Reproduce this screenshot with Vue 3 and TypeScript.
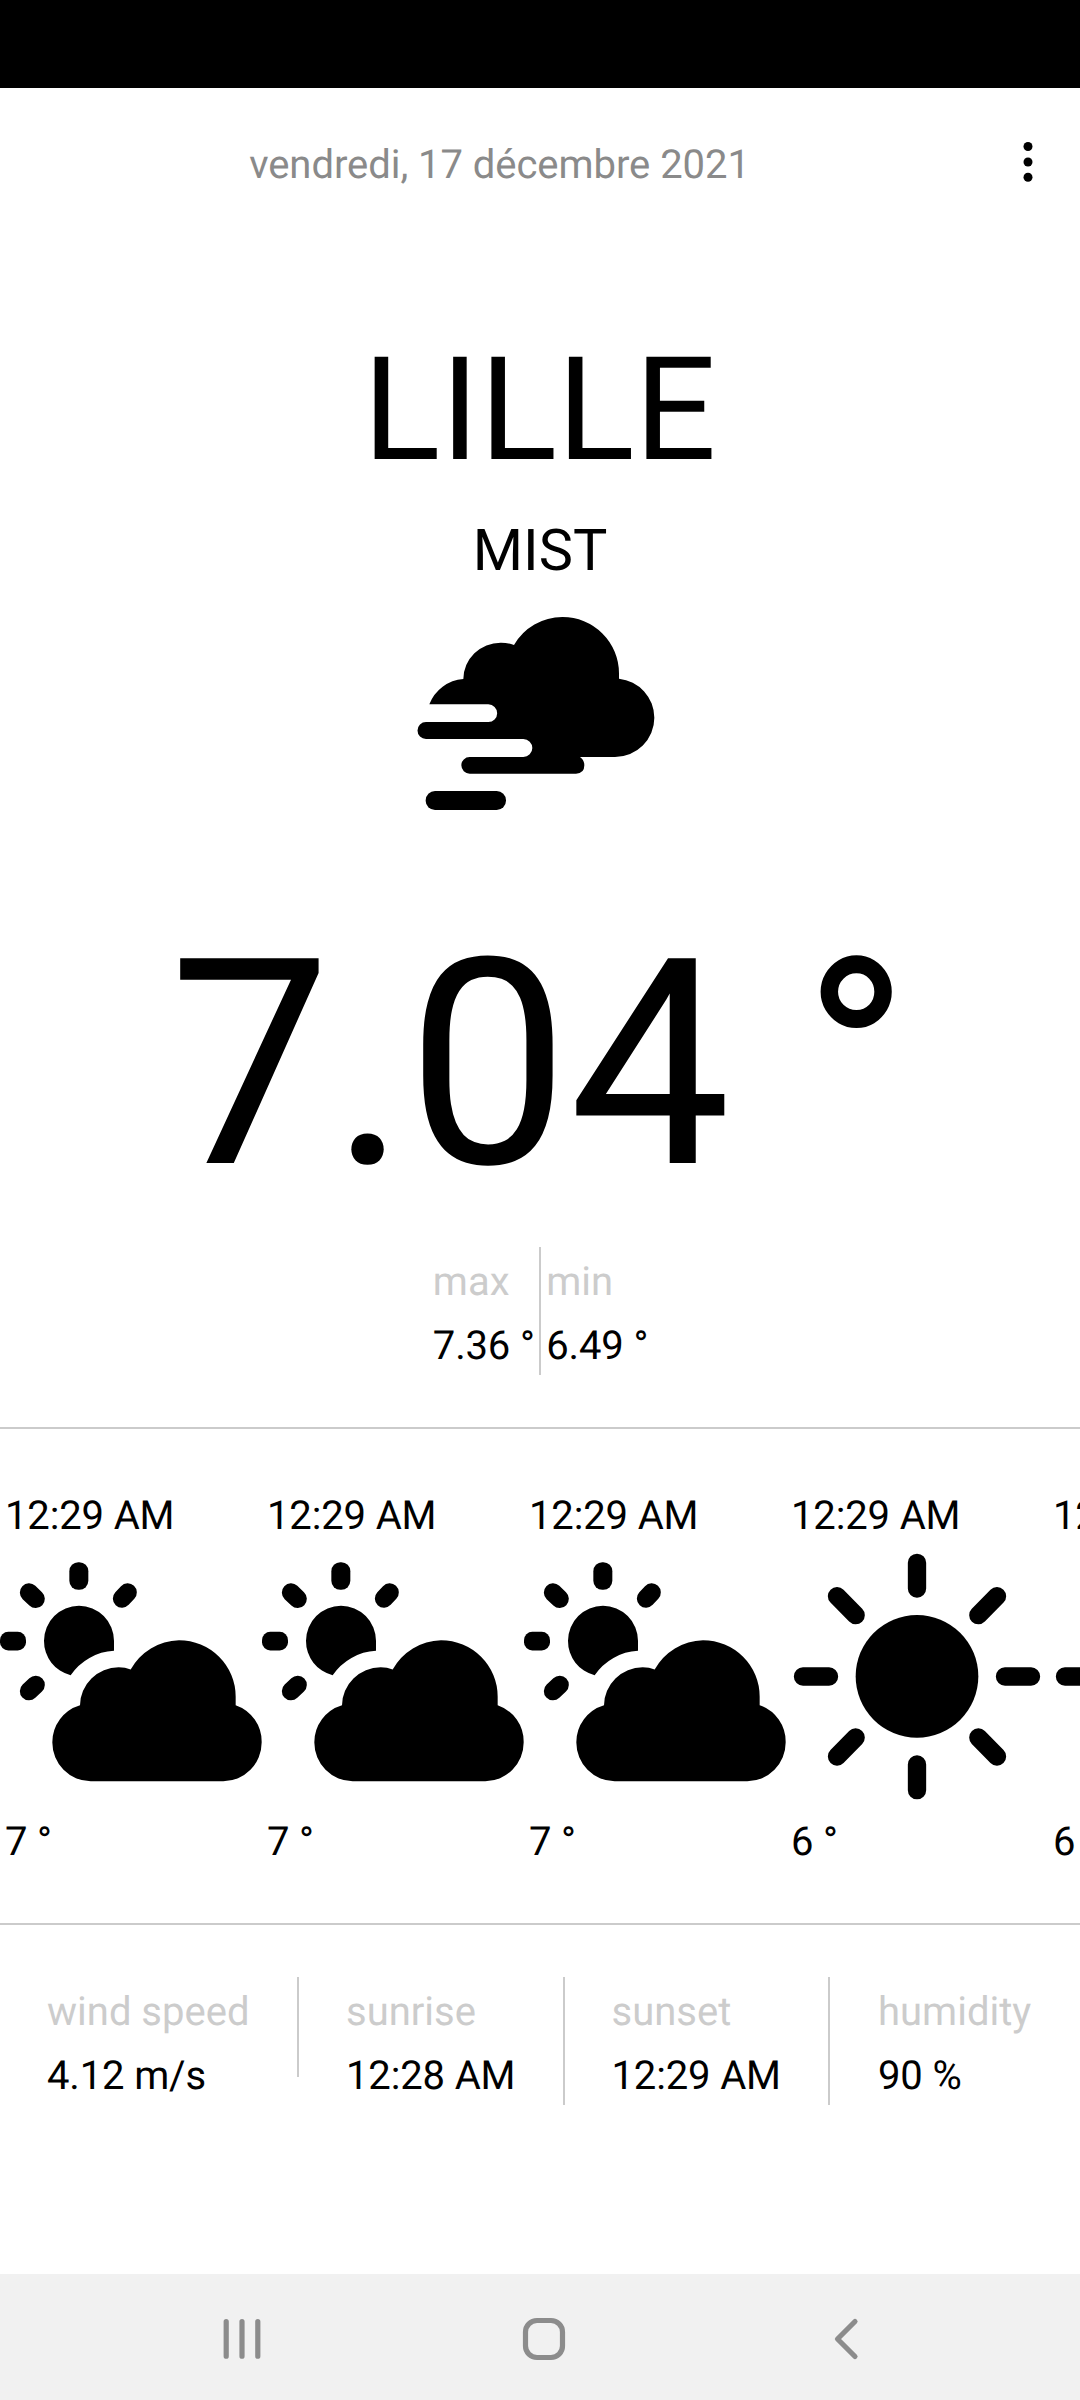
<script setup lang="ts">
interface Forecast {
  time: string
  icon: 'partly' | 'sun'
  temp: string
}

interface Stat {
  label: string
  value: string
}

const forecasts: Forecast[] = [
  { time: '12:29 AM', icon: 'partly', temp: '7 °' },
  { time: '12:29 AM', icon: 'partly', temp: '7 °' },
  { time: '12:29 AM', icon: 'partly', temp: '7 °' },
  { time: '12:29 AM', icon: 'sun', temp: '6 °' },
  { time: '12:29 AM', icon: 'sun', temp: '6 °' },
]

const stats: Stat[] = [
  { label: 'wind speed', value: '4.12 m/s' },
  { label: 'sunrise', value: '12:28 AM' },
  { label: 'sunset', value: '12:29 AM' },
  { label: 'humidity', value: '90 %' },
]
</script>

<template>
  <div class="screen">
    <div class="status-bar"></div>

    <header class="header">
      <div class="date">vendredi, 17 décembre 2021</div>
      <button class="menu" aria-label="menu">
        <svg width="64" height="48" viewBox="0 0 64 48">
          <circle cx="32" cy="8.5" r="4.5" />
          <circle cx="32" cy="24" r="4.5" />
          <circle cx="32" cy="39.3" r="4.5" />
        </svg>
      </button>
    </header>

    <main class="current">
      <h1 class="city">LILLE</h1>
      <div class="condition">MIST</div>
      <svg class="mist" viewBox="0 0 840 660">
        <path
          d="M88 313A118 118 0 0 1 190 237A112 110 0 0 1 302 128A112 112 0 0 1 342 135A168 168 0 0 1 487 51A169 169 0 0 1 657 220V236A118 118 0 0 1 763 353A118 118 0 0 1 645 471H540Q553 480 553 496Q553 521 528 521H209A25 25 0 0 1 209 471H370A27 27 0 0 0 370 417H78A25.500 25.500 0 0 1 78 366H265A26.500 26.500 0 0 0 265 313Z"
        />
        <rect x="77" y="573" width="241" height="57" rx="28" />
      </svg>
      <div class="temperature">7.04 °</div>
      <div class="range">
        <div class="pair">
          <span class="label">max</span>
          <span class="value">7.36 °</span>
        </div>
        <div class="pair bordered">
          <span class="label">min</span>
          <span class="value">6.49 °</span>
        </div>
      </div>
    </main>

    <section class="forecast">
      <article v-for="(item, i) in forecasts" :key="i" class="hour">
        <span class="value">{{ item.time }}</span>
        <svg v-if="item.icon === 'partly'" class="weather" viewBox="0 223.5 786 787.5">
          <path
            d="M342 541A168 168 0 0 0 212 614A105 105 0 0 1 132 511A105 105 0 0 1 237 406A105 105 0 0 1 342 511Z"
          />
          <rect x="208" y="275" width="57" height="83" rx="27" />
          <rect x="0" y="484" width="78" height="56" rx="25" />
          <path class="ray" d="M87 366L107 385M383 366L366 384M87 662L107 643" />
          <path
            d="M272 932A116 116 0 0 1 157 816A116 116 0 0 1 240 704A117 115 0 0 1 356 590Q376 590 392 597A170 169 0 0 1 537 509A170 169 0 0 1 707 678V704A116 116 0 0 1 785 816A116 116 0 0 1 670 932Z"
          />
        </svg>
        <svg v-else class="weather" viewBox="18 223.5 786 787.5">
          <circle cx="411" cy="617.500" r="184" />
          <path
            class="ray"
            d="M411 277V354M411 882V959M69 618H147M675 618H753M171 377L227 434M651 377L595 434M227 801L171 858M595 801L651 858"
          />
        </svg>
        <span class="value degrees">{{ item.temp }}</span>
      </article>
    </section>

    <section class="stats">
      <div v-for="stat in stats" :key="stat.label" class="stat">
        <span class="label">{{ stat.label }}</span>
        <span class="value">{{ stat.value }}</span>
      </div>
    </section>

    <nav class="nav-bar">
      <svg width="48" height="48" viewBox="0 0 48 48">
        <path d="M8.200 6.500V41.200M24 6.500V41.200M39.800 6.500V41.200" />
      </svg>
      <svg width="48" height="48" viewBox="0 0 48 48">
        <rect x="5.500" y="5.500" width="37" height="37" rx="11.500" />
      </svg>
      <svg width="48" height="48" viewBox="0 0 48 48">
        <path d="M33 6.500L15.500 24L33 41.500" />
      </svg>
    </nav>
  </div>
</template>

<style>
body {
  margin: 0;
  background: #fff;
}
</style>

<style scoped>
.screen {
  display: flex;
  flex-direction: column;
  width: 1080px;
  height: 2400px;
  overflow: hidden;
  background: #fff;
  color: #000;
  font-family: Roboto, sans-serif;
  font-size: 40px;
  text-rendering: geometricPrecision;
  white-space: nowrap;
}

.screen svg {
  display: block;
  flex: none;
}

.status-bar {
  flex: none;
  height: 88px;
  background: #000;
}

.header {
  display: flex;
  flex: none;
  align-items: center;
  height: 148px;
}

.date {
  flex: 1;
  padding: 5px 0 0 3px;
  line-height: 54px;
  letter-spacing: -0.050px;
  text-align: center;
  color: #8a8a8a;
}

.menu {
  flex: none;
  width: 84px;
  padding: 0;
  border: 0;
  background: none;
}

.current {
  display: flex;
  flex: none;
  flex-direction: column;
  align-items: center;
  box-sizing: border-box;
  height: 1193px;
  padding-top: 77px;
  border-bottom: 2px solid #cbcbcb;
}

.city {
  height: 192px;
  margin: 0;
  padding-right: 1px;
  font-size: 144px;
  font-weight: 400;
  line-height: 196px;
}

.condition {
  height: 95px;
  font-size: 57.600px;
  line-height: 94px;
}

.mist {
  width: 280px;
  height: 220px;
}

.temperature {
  height: 427px;
  padding-right: 1px;
  font-size: 288px;
  line-height: 492px;
}

.range {
  display: flex;
}

.pair,
.stat,
.hour {
  display: flex;
  flex-direction: column;
}

.pair {
  padding: 0 5.250px;
}

.bordered {
  margin: 0 -1px;
  border-left: 2px solid #cbcbcb;
}

.label,
.value {
  height: 59px;
  padding-top: 5px;
  line-height: 60px;
}

.label {
  color: #ccc;
}

.value {
  letter-spacing: -0.150px;
}

.forecast {
  display: flex;
  flex: none;
  box-sizing: border-box;
  height: 496px;
  padding-top: 52px;
  border-bottom: 2px solid #cbcbcb;
  overflow: hidden;
}

.hour {
  flex: none;
  width: 262px;
}

.hour .value {
  padding-left: 5px;
}

.hour .degrees {
  padding-top: 4px;
}

.weather {
  width: 262px;
  height: 262.500px;
}

.ray {
  fill: none;
  stroke: #000;
  stroke-width: 55;
  stroke-linecap: round;
}

.stats {
  display: flex;
  flex: none;
  height: 297px;
  padding-top: 52px;
}

.stat {
  flex: none;
  box-sizing: border-box;
  width: 265.500px;
  height: 128px;
  padding-left: 47px;
  border-left: 2px solid #cbcbcb;
}

.stat:first-child {
  width: 297px;
  border-left: 0;
}

.stat:nth-child(2) {
  height: 100px;
}

.stat:last-child {
  flex: 1;
  padding-left: 48px;
}

.nav-bar {
  display: flex;
  flex: 1;
  align-items: center;
  justify-content: space-between;
  padding: 4px 210px 0 218px;
  background: #f1f1f1;
}

.nav-bar svg {
  fill: none;
  stroke: #8c8c8c;
  stroke-width: 5.200;
  stroke-linecap: round;
  stroke-linejoin: round;
}
</style>
